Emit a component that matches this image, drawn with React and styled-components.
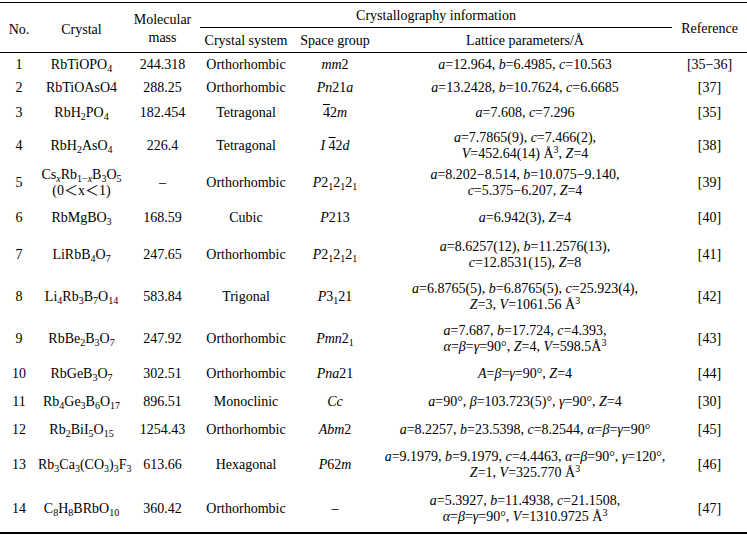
import React from "react";
import styled, { createGlobalStyle } from "styled-components";

const Global = createGlobalStyle`
  html, body { margin: 0; padding: 0; background: #fff; }
  body { font-family: "Liberation Serif", "Noto Sans CJK SC", serif; color: #000; }
`;

const Wrap = styled.div`
  width: 747px;
  padding-top: 2px;
`;

const Table = styled.table`
  width: 747px;
  border-collapse: collapse;
  table-layout: fixed;
  font-size: 14px;
  border-top: 1px solid #000;
  border-bottom: 2px solid #000;
`;

const Head = styled.thead`
  border-bottom: 1px solid #000;
`;

const HeadRow = styled.tr`
  height: ${(p) => p.$h}px;
`;

const HeadCell = styled.th`
  font-weight: normal;
  text-align: center;
  vertical-align: middle;
  padding: ${(p) => p.$pt || 0}px 0 0 0;
  line-height: ${(p) => p.$lh || 16}px;
  border-bottom: ${(p) => (p.$rule ? "1px solid #000" : "none")};
  white-space: nowrap;
`;

const Row = styled.tr`
  height: ${(p) => p.$h}px;
`;

const Cell = styled.td`
  padding: 0;
  text-align: center;
  vertical-align: middle;
  line-height: 16px;
  white-space: nowrap;
`;

const I = styled.i`
  font-style: italic;
`;

const Sub = styled.sub`
  font-size: 10px;
  vertical-align: -3px;
  line-height: 0;
`;

const Sup = styled.sup`
  font-size: 10px;
  vertical-align: 5px;
  line-height: 0;
`;

const Bar = styled.span`
  text-decoration: overline;
`;

const rows = [
  {
    h: 25,
    crystal: <>RbTiOPO<Sub>4</Sub></>,
    mass: "244.318",
    system: "Orthorhombic",
    group: <><I>mm</I>2</>,
    lattice: [<><I>a</I>=12.964, <I>b</I>=6.4985, <I>c</I>=10.563</>],
    ref: "[35−36]",
  },
  {
    h: 21,
    crystal: "RbTiOAsO4",
    mass: "288.25",
    system: "Orthorhombic",
    group: <><I>Pn</I>21<I>a</I></>,
    lattice: [<><I>a</I>=13.2428, <I>b</I>=10.7624, <I>c</I>=6.6685</>],
    ref: "[37]",
  },
  {
    h: 28,
    crystal: <>RbH<Sub>2</Sub>PO<Sub>4</Sub></>,
    mass: "182.454",
    system: "Tetragonal",
    group: <><Bar>4</Bar>2<I>m</I></>,
    lattice: [<><I>a</I>=7.608, <I>c</I>=7.296</>],
    ref: "[35]",
  },
  {
    h: 38,
    crystal: <>RbH<Sub>2</Sub>AsO<Sub>4</Sub></>,
    mass: "226.4",
    system: "Tetragonal",
    group: <><I>I</I> <Bar>4</Bar>2<I>d</I></>,
    lattice: [
      <><I>a</I>=7.7865(9), <I>c</I>=7.466(2),</>,
      <><I>V</I>=452.64(14) Å<Sup>3</Sup>, <I>Z</I>=4</>,
    ],
    ref: "[38]",
  },
  {
    h: 36,
    crystal: (
      <>
        Cs<Sub><I>x</I></Sub>Rb<Sub>1−<I>x</I></Sub>B<Sub>3</Sub>O<Sub>5</Sub>
        <br />
        (0＜x＜1)
      </>
    ),
    mass: "–",
    system: "Orthorhombic",
    group: <><I>P</I>2<Sub>1</Sub>2<Sub>1</Sub>2<Sub>1</Sub></>,
    lattice: [
      <><I>a</I>=8.202−8.514, <I>b</I>=10.075−9.140,</>,
      <><I>c</I>=5.375−6.207, <I>Z</I>=4</>,
    ],
    ref: "[39]",
  },
  {
    h: 34,
    crystal: <>RbMgBO<Sub>3</Sub></>,
    mass: "168.59",
    system: "Cubic",
    group: <><I>P</I>213</>,
    lattice: [<><I>a</I>=6.942(3), <I>Z</I>=4</>],
    ref: "[40]",
  },
  {
    h: 40,
    crystal: <>LiRbB<Sub>4</Sub>O<Sub>7</Sub></>,
    mass: "247.65",
    system: "Orthorhombic",
    group: <><I>P</I>2<Sub>1</Sub>2<Sub>1</Sub>2<Sub>1</Sub></>,
    lattice: [
      <><I>a</I>=8.6257(12), <I>b</I>=11.2576(13),</>,
      <><I>c</I>=12.8531(15), <I>Z</I>=8</>,
    ],
    ref: "[41]",
  },
  {
    h: 45,
    crystal: <>Li<Sub>4</Sub>Rb<Sub>3</Sub>B<Sub>7</Sub>O<Sub>14</Sub></>,
    mass: "583.84",
    system: "Trigonal",
    group: <><I>P</I>3<Sub>1</Sub>21</>,
    lattice: [
      <><I>a</I>=6.8765(5), <I>b</I>=6.8765(5), <I>c</I>=25.923(4),</>,
      <><I>Z</I>=3, <I>V</I>=1061.56 Å<Sup>3</Sup></>,
    ],
    ref: "[42]",
  },
  {
    h: 39,
    crystal: <>RbBe<Sub>2</Sub>B<Sub>3</Sub>O<Sub>7</Sub></>,
    mass: "247.92",
    system: "Orthorhombic",
    group: <><I>Pmn</I>2<Sub>1</Sub></>,
    lattice: [
      <><I>a</I>=7.687, <I>b</I>=17.724, <I>c</I>=4.393,</>,
      <><I>α</I>=<I>β</I>=<I>γ</I>=90°, <I>Z</I>=4, <I>V</I>=598.5Å<Sup>3</Sup></>,
    ],
    ref: "[43]",
  },
  {
    h: 31,
    crystal: <>RbGeB<Sub>3</Sub>O<Sub>7</Sub></>,
    mass: "302.51",
    system: "Orthorhombic",
    group: <><I>Pna</I>21</>,
    lattice: [<><I>A</I>=<I>β</I>=<I>γ</I>=90°, <I>Z</I>=4</>],
    ref: "[44]",
  },
  {
    h: 25,
    crystal: <>Rb<Sub>4</Sub>Ge<Sub>3</Sub>B<Sub>6</Sub>O<Sub>17</Sub></>,
    mass: "896.51",
    system: "Monoclinic",
    group: <I>Cc</I>,
    lattice: [<><I>a</I>=90°, <I>β</I>=103.723(5)°, <I>γ</I>=90°, <I>Z</I>=4</>],
    ref: "[30]",
  },
  {
    h: 30,
    crystal: <>Rb<Sub>2</Sub>BiI<Sub>5</Sub>O<Sub>15</Sub></>,
    mass: "1254.43",
    system: "Orthorhombic",
    group: <><I>Abm</I>2</>,
    lattice: [<><I>a</I>=8.2257, <I>b</I>=23.5398, <I>c</I>=8.2544, <I>α</I>=<I>β</I>=<I>γ</I>=90°</>],
    ref: "[45]",
  },
  {
    h: 41,
    crystal: <>Rb<Sub>3</Sub>Ca<Sub>3</Sub>(CO<Sub>3</Sub>)<Sub>3</Sub>F<Sub>3</Sub></>,
    mass: "613.66",
    system: "Hexagonal",
    group: <><I>P</I>62<I>m</I></>,
    lattice: [
      <><I>a</I>=9.1979, <I>b</I>=9.1979, <I>c</I>=4.4463, <I>α</I>=<I>β</I>=90°, <I>γ</I>=120°,</>,
      <><I>Z</I>=1, <I>V</I>=325.770 Å<Sup>3</Sup></>,
    ],
    ref: "[46]",
  },
  {
    h: 47,
    crystal: <>C<Sub>8</Sub>H<Sub>8</Sub>BRbO<Sub>10</Sub></>,
    mass: "360.42",
    system: "Orthorhombic",
    group: "–",
    lattice: [
      <><I>a</I>=5.3927, <I>b</I>=11.4938, <I>c</I>=21.1508,</>,
      <><I>α</I>=<I>β</I>=<I>γ</I>=90°, <I>V</I>=1310.9725 Å<Sup>3</Sup></>,
    ],
    ref: "[47]",
  },
];

export default function App() {
  return (
    <Wrap>
      <Global />
      <Table>
        <colgroup>
          <col style={{ width: 38 }} />
          <col style={{ width: 87 }} />
          <col style={{ width: 75 }} />
          <col style={{ width: 92 }} />
          <col style={{ width: 86 }} />
          <col style={{ width: 294 }} />
          <col style={{ width: 75 }} />
        </colgroup>
        <Head>
          <HeadRow $h={25}>
            <HeadCell rowSpan={2} $pt={4}>No.</HeadCell>
            <HeadCell rowSpan={2} $pt={4}>Crystal</HeadCell>
            <HeadCell rowSpan={2} $lh={18} $pt={2}>
              Molecular
              <br />
              mass
            </HeadCell>
            <HeadCell colSpan={3} $rule $pt={2}>
              Crystallography information
            </HeadCell>
            <HeadCell rowSpan={2} $pt={2}>Reference</HeadCell>
          </HeadRow>
          <HeadRow $h={25}>
            <HeadCell $pt={2}>Crystal system</HeadCell>
            <HeadCell $pt={2}>Space group</HeadCell>
            <HeadCell $pt={2}>Lattice parameters/Å</HeadCell>
          </HeadRow>
        </Head>
        <tbody>
          {rows.map((r, i) => (
            <Row key={i} $h={r.h}>
              <Cell>{i + 1}</Cell>
              <Cell>{r.crystal}</Cell>
              <Cell>{r.mass}</Cell>
              <Cell>{r.system}</Cell>
              <Cell>{r.group}</Cell>
              <Cell>
                {r.lattice.map((l, j) => (
                  <React.Fragment key={j}>
                    {j > 0 && <br />}
                    {l}
                  </React.Fragment>
                ))}
              </Cell>
              <Cell>{r.ref}</Cell>
            </Row>
          ))}
        </tbody>
      </Table>
    </Wrap>
  );
}
